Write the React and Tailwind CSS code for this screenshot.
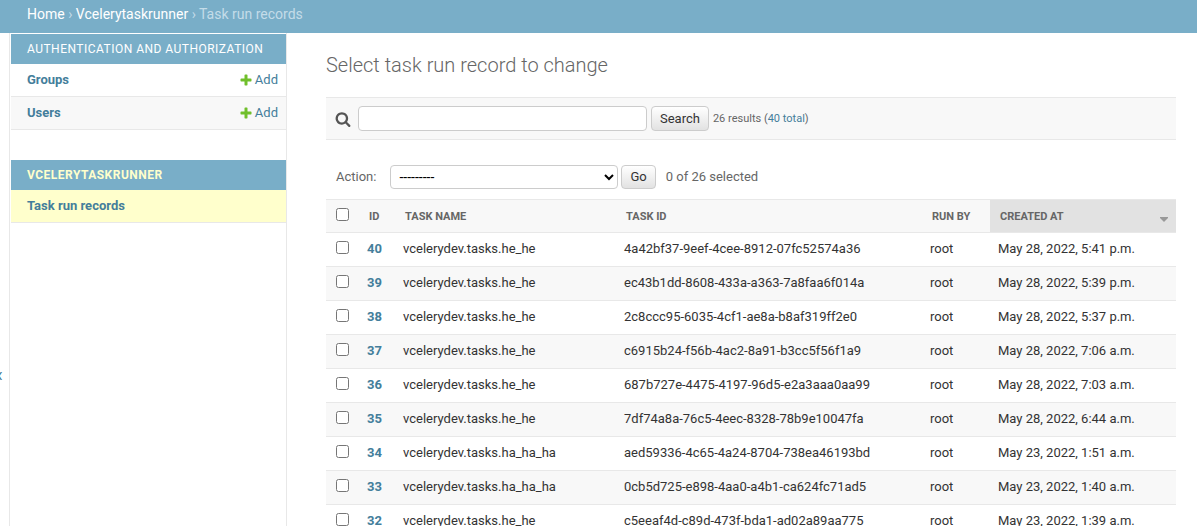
import React from "react";

const records = [
  [40, "vcelerydev.tasks.he_he", "4a42bf37-9eef-4cee-8912-07fc52574a36", "May 28, 2022, 5:41 p.m."],
  [39, "vcelerydev.tasks.he_he", "ec43b1dd-8608-433a-a363-7a8faa6f014a", "May 28, 2022, 5:39 p.m."],
  [38, "vcelerydev.tasks.he_he", "2c8ccc95-6035-4cf1-ae8a-b8af319ff2e0", "May 28, 2022, 5:37 p.m."],
  [37, "vcelerydev.tasks.he_he", "c6915b24-f56b-4ac2-8a91-b3cc5f56f1a9", "May 28, 2022, 7:06 a.m."],
  [36, "vcelerydev.tasks.he_he", "687b727e-4475-4197-96d5-e2a3aaa0aa99", "May 28, 2022, 7:03 a.m."],
  [35, "vcelerydev.tasks.he_he", "7df74a8a-76c5-4eec-8328-78b9e10047fa", "May 28, 2022, 6:44 a.m."],
  [34, "vcelerydev.tasks.ha_ha_ha", "aed59336-4c65-4a24-8704-738ea46193bd", "May 23, 2022, 1:51 a.m."],
  [33, "vcelerydev.tasks.ha_ha_ha", "0cb5d725-e898-4aa0-a4b1-ca624fc71ad5", "May 23, 2022, 1:40 a.m."],
  [32, "vcelerydev.tasks.he_he", "c5eeaf4d-c89d-473f-bda1-ad02a89aa775", "May 23, 2022, 1:39 a.m."],
];

function PlusIcon() {
  return (
    <svg viewBox="0 0 1792 1792" className="size-[14px] fill-[#70bf2b]" aria-hidden="true">
      <path d="M1600 796v192q0 40-28 68t-68 28h-416v416q0 40-28 68t-68 28h-192q-40 0-68-28t-28-68v-416h-416q-40 0-68-28t-28-68v-192q0-40 28-68t68-28h416v-416q0-40 28-68t68-28h192q40 0 68 28t28 68v416h416q40 0 68 28t28 68z" />
    </svg>
  );
}

function SearchIcon() {
  return (
    <svg viewBox="0 0 1792 1792" className="size-4 fill-[#555]" aria-hidden="true">
      <path d="M1216 832q0-185-131.5-316.5t-316.5-131.5-316.5 131.5-131.5 316.5 131.5 316.5 316.5 131.5 316.5-131.5 131.5-316.5zm512 832q0 52-38 90t-90 38q-54 0-90-38l-343-342q-179 124-399 124-143 0-273.5-55.5t-225-150-150-225-55.5-273.5 55.5-273.5 150-225 225-150 273.5-55.5 273.5 55.5 225 150 150 225 55.5 273.5q0 220-124 399l343 343q37 37 37 90z" />
    </svg>
  );
}

function AddRow({ name, shaded }) {
  return (
    <li className={`flex h-[33px] items-center justify-between border-b border-[#e8e8e8] pr-2 pl-4 ${shaded ? "bg-[#f8f8f8]" : "bg-white"}`}>
      <a href="#" className="font-bold text-[#447e9b]">{name}</a>
      <a href="#" className="flex items-center gap-[2px] text-[#447e9b]">
        <PlusIcon />
        Add
      </a>
    </li>
  );
}

function Sidebar() {
  return (
    <nav aria-label="Applications" className="w-[277px] shrink-0 border-r border-[#e8e8e8] pt-px pl-px">
      <h2 className="flex h-[30px] items-center bg-[#79aec8] pl-4 text-[12px] font-normal tracking-[0.04em] text-white uppercase">
        <a href="#">Authentication and Authorization</a>
      </h2>
      <ul>
        <AddRow name="Groups" />
        <AddRow name="Users" shaded />
      </ul>
      <h2 className="mt-[30px] flex h-[30px] items-center bg-[#79aec8] pl-4 text-[12px] font-bold tracking-[0.04em] text-[#ffffcc] uppercase">
        <a href="#">Vcelerytaskrunner</a>
      </h2>
      <ul>
        <li className="flex h-[33px] items-center border-b border-[#e8e8e8] bg-[#ffffcc] pl-4">
          <a href="#" className="font-bold text-[#447e9b]">Task run records</a>
        </li>
      </ul>
    </nav>
  );
}

const buttonStyle =
  "rounded-[4px] border border-[#ccc] bg-linear-to-b from-white to-[#e2e2e2] px-2 text-[#333]";
const headStyle = "px-[10px] pt-[2px] text-left text-[11px] font-bold text-[#666] uppercase";

function Results() {
  return (
    <table className="w-full table-fixed border-collapse">
      <colgroup>
        <col className="w-[33px]" />
        <col className="w-[36px]" />
        <col className="w-[26%]" />
        <col className="w-[36%]" />
        <col className="w-[8%]" />
        <col />
      </colgroup>
      <thead>
        <tr className="h-[33px] border-y border-[#e8e8e8] bg-[#f8f8f8]">
          <th className="pb-1 pl-[10px] text-left">
            <input type="checkbox" aria-label="Select all records" className="block size-[13px]" />
          </th>
          <th className={headStyle}><a href="#">ID</a></th>
          <th className={headStyle}><a href="#">Task name</a></th>
          <th className={headStyle}><a href="#">Task ID</a></th>
          <th className={headStyle}><a href="#">Run by</a></th>
          <th className="bg-[#e2e2e2] pt-[2px] pr-2 pl-[10px] text-[11px] font-bold text-[#666] uppercase">
            <span className="flex items-center justify-between">
              <a href="#">Created at</a>
              <svg viewBox="0 0 8 5" className="mt-1 h-[5px] w-2 fill-[#999]" aria-hidden="true">
                <path d="M0 0h8v1L4 5 0 1z" />
              </svg>
            </span>
          </th>
        </tr>
      </thead>
      <tbody>
        {records.map(([id, name, taskId, created], i) => (
          <tr key={id} className={`h-[34px] border-b border-[#e8e8e8] ${i % 2 ? "bg-[#f8f8f8]" : "bg-white"}`}>
            <td className="pb-1 pl-[10px]">
              <input type="checkbox" aria-label={`Select record ${id}`} className="block size-[13px]" />
            </td>
            <th scope="row" className="px-2 pb-[2px] text-left font-bold">
              <a href="#" className="text-[#447e9b]">{id}</a>
            </th>
            <td className="px-2 pb-[2px]">{name}</td>
            <td className="px-2 pb-[2px]">{taskId}</td>
            <td className="px-2 pb-[2px]">root</td>
            <td className="px-2 pb-[2px]">{created}</td>
          </tr>
        ))}
      </tbody>
    </table>
  );
}

export default function App() {
  return (
    <div className="flex h-screen flex-col overflow-hidden bg-white font-['Roboto',sans-serif] text-[13px] leading-5 text-[#333]">
      <nav aria-label="Breadcrumbs" className="h-[33px] shrink-0 bg-[#79aec8] pt-1 pl-[27px] text-[14px] text-[#c4dce8]">
        <a href="#" className="text-white">Home</a> ›{" "}
        <a href="#" className="text-white">Vcelerytaskrunner</a> › Task run records
      </nav>
      <div className="flex min-h-0 flex-1">
        <button
          type="button"
          aria-label="Toggle navigation"
          className="flex w-[10px] shrink-0 items-center justify-end overflow-hidden border-r border-[#e8e8e8] pt-[190px] pr-[6px] text-[20px] text-[#447e9b]"
        >
          <span>«</span>
        </button>
        <Sidebar />
        <main className="min-w-0 flex-1 overflow-hidden pt-5 pr-[21px] pl-[39px]">
          <h1 className="text-[20px] leading-6 font-light text-[#666]">Select task run record to change</h1>
          <form className="mt-5 flex h-[43px] items-center border-y border-[#e8e8e8] bg-[#f8f8f8] pl-[9px]">
            <label htmlFor="searchbar" className="mr-[7px]"><SearchIcon /></label>
            <input
              id="searchbar"
              type="text"
              aria-label="Search records"
              className="mr-1 h-[25px] w-[289px] rounded-[4px] border border-[#ccc] bg-white px-[5px]"
            />
            <button type="button" className={`mr-1 h-[25px] ${buttonStyle}`}>Search</button>
            <span className="text-[11px] text-[#666]">
              26 results (<a href="#" className="text-[#447e9b]">40 total</a>)
            </span>
          </form>
          <div className="my-[10px] flex h-[39px] items-end pl-[10px] text-[#666]">
            <label htmlFor="action" className="mr-[14px] leading-6">Action:</label>
            <select id="action" className="mr-[3px] h-6 w-[228px] rounded-[4px] border border-[#ccc] bg-white pl-1 text-[14px] text-black">
              <option>---------</option>
            </select>
            <button type="button" className={`mr-[10px] h-6 ${buttonStyle}`}>Go</button>
            <span className="leading-6">0 of 26 selected</span>
          </div>
          <Results />
        </main>
      </div>
    </div>
  );
}
